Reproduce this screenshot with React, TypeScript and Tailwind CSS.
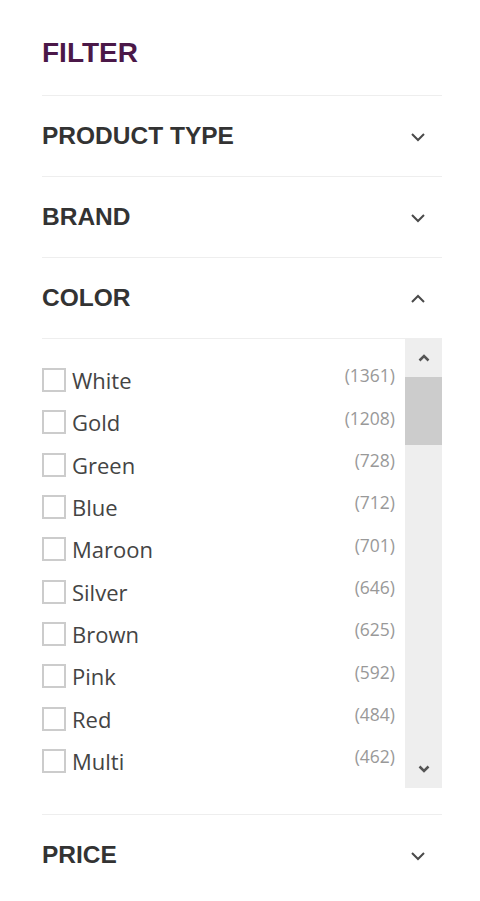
import React from "react";

const colors: [string, number][] = [
  ["White", 1361],
  ["Gold", 1208],
  ["Green", 728],
  ["Blue", 712],
  ["Maroon", 701],
  ["Silver", 646],
  ["Brown", 625],
  ["Pink", 592],
  ["Red", 484],
  ["Multi", 462],
];

function Chevron({ up }: { up?: boolean }) {
  return (
    <svg width="16" height="10" viewBox="0 0 16 10" className="mr-[16px]">
      <path
        d={up ? "M2 8 L8 2 L14 8" : "M2 2 L8 8 L14 2"}
        fill="none"
        stroke="#4a4a4a"
        strokeWidth="2"
      />
    </svg>
  );
}

function Section({ title, up }: { title: string; up?: boolean }) {
  return (
    <div className="h-[81px] border-t border-[#eeeeee] flex items-center justify-between pt-[1px]">
      <span className="text-[24.5px] font-bold text-[#333333] leading-none [font-family:'Liberation_Sans',Arial,sans-serif]">
        {title}
      </span>
      <Chevron up={up} />
    </div>
  );
}

export default function App() {
  return (
    <div className="w-[480px] bg-white pl-[42px] pr-[38px] pb-[5px]">
      <div className="h-[95px] flex items-center pt-[11px]">
        <span className="text-[28px] font-bold text-[#4b1848] leading-none [font-family:'Liberation_Sans',Arial,sans-serif]">
          FILTER
        </span>
      </div>
      <Section title="PRODUCT TYPE" />
      <Section title="BRAND" />
      <Section title="COLOR" up />
      <div className="border-t border-[#eeeeee] flex h-[450px]">
        <div className="flex-1 pt-[20px] pr-[10px] [font-family:'Open_Sans',sans-serif]">
          {colors.map(([name, count]) => (
            <div key={name} className="h-[42.33px] flex items-center justify-between">
              <div className="flex items-center gap-[6px]">
                <div className="w-[24px] h-[24px] border-2 border-[#cccccc] bg-white" />
                <span className="text-[22px] text-[#444444] leading-none">{name}</span>
              </div>
              <span className="text-[17.5px] text-[#999999] leading-none -mt-[8px]">({count})</span>
            </div>
          ))}
        </div>
        <div className="w-[37px] bg-[#eeeeee] flex flex-col items-center">
          <div className="h-[38px] flex items-center justify-center">
            <svg width="12" height="8" viewBox="0 0 12 8">
              <path d="M1.5 6.5 L6 2 L10.5 6.5" fill="none" stroke="#555555" strokeWidth="2.5" />
            </svg>
          </div>
          <div className="w-full h-[68px] bg-[#cccccc]" />
          <div className="flex-1" />
          <div className="h-[38px] flex items-center justify-center">
            <svg width="12" height="8" viewBox="0 0 12 8">
              <path d="M1.5 1.5 L6 6 L10.5 1.5" fill="none" stroke="#555555" strokeWidth="2.5" />
            </svg>
          </div>
        </div>
      </div>
      <div className="h-[26px]" />
      <Section title="PRICE" />
    </div>
  );
}
